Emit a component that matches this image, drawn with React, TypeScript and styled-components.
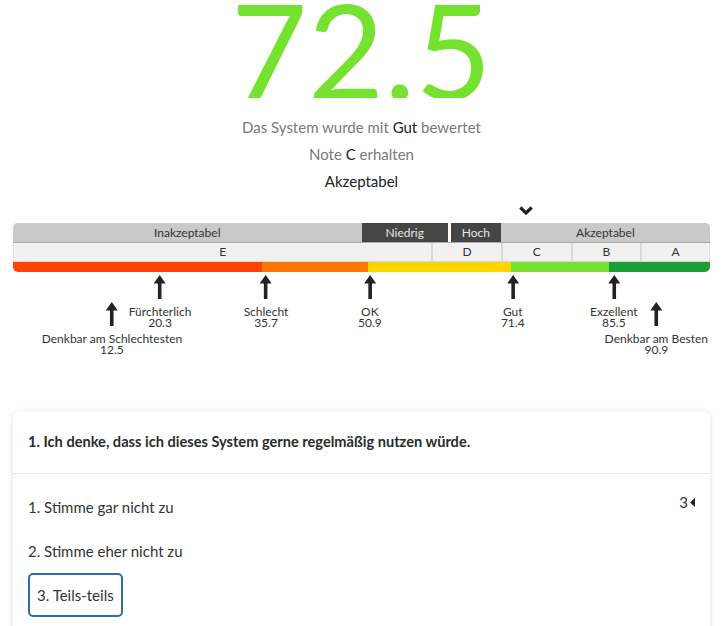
import React from 'react';
import styled, { createGlobalStyle } from 'styled-components';

const GlobalStyle = createGlobalStyle`
  html, body {
    margin: 0;
    padding: 0;
    overflow: hidden;
    background: #fff;
  }

  body {
    font-family: Lato, "Open Sans", "Liberation Sans", sans-serif;
    color: #333;
  }
`;

const Page = styled.div`
  padding: 0 13px;
`;

const Score = styled.div`
  font-size: 132px;
  font-weight: 400;
  line-height: 98px;
  height: 98px;
  margin-bottom: 16px;
  overflow: hidden;
  text-align: center;
  color: #75e22f;
`;

const Verdict = styled.div<{ $dark?: boolean }>`
  font-size: 15px;
  line-height: 27px;
  text-align: center;
  color: ${(p) => (p.$dark ? '#222' : '#7a7a7a')};
`;

const Strong = styled.span`
  color: #222;
`;

const Scale = styled.div`
  position: relative;
`;

const PointerRow = styled.div`
  position: relative;
  height: 28px;
`;

const Pointer = styled.svg`
  position: absolute;
  top: 11px;
  transform: translateX(-50%);
`;

const Bands = styled.div`
  border-radius: 5px;
  overflow: hidden;
`;

const LevelRow = styled.div`
  display: flex;
  height: 20px;
  background: #c9c9c9;
  border-bottom: 1px solid #a9a9a9;
  box-sizing: border-box;
`;

const Level = styled.div<{ $active?: boolean; $gap?: boolean }>`
  box-sizing: border-box;
  font-size: 12px;
  line-height: 19px;
  text-align: center;
  white-space: nowrap;
  color: ${(p) => (p.$active ? '#e6e6e6' : '#333')};
  background: ${(p) => (p.$active ? '#454545' : '#c9c9c9')};
  border-left: ${(p) => (p.$gap ? '3px solid #fff' : 'none')};
`;

const GradeRow = styled.div`
  display: flex;
  height: 19px;
  background: #f1f1f1;
  border-bottom: 1px solid #d6d6d6;
  box-sizing: border-box;
`;

const Grade = styled.div<{ $first?: boolean }>`
  box-sizing: border-box;
  font-size: 12px;
  line-height: 18px;
  text-align: center;
  color: #333;
  border-left: ${(p) => (p.$first ? '1px solid #e2e2e2' : '2px solid #dadada')};
  &:last-child {
    border-right: 1px solid #e2e2e2;
  }
`;

const ColorRow = styled.div`
  display: flex;
  height: 10px;
`;

const ColorBand = styled.div<{ $color: string }>`
  background: ${(p) => p.$color};
`;

const Markers = styled.div`
  position: relative;
  height: 100px;
`;

const Marker = styled.div<{ $low?: boolean }>`
  position: absolute;
  top: ${(p) => (p.$low ? '30px' : '3px')};
  transform: translateX(-50%);
  display: flex;
  flex-direction: column;
  align-items: center;
`;

const Arrow = styled.svg`
  display: block;
  margin-bottom: 6.5px;
`;

const MarkerText = styled.div`
  font-size: 12px;
  line-height: 11px;
  text-align: center;
  white-space: nowrap;
  color: #333;
`;

const Card = styled.div`
  margin-top: 39px;
  border-radius: 7px;
  background: #fff;
  box-shadow: 0 1px 6px rgba(0, 0, 0, 0.14);
`;

const CardHeader = styled.div`
  padding: 20px 15px;
  font-size: 14.6px;
  font-weight: 700;
  line-height: 22px;
  color: #2b2b2b;
  border-bottom: 1px solid #e6e6e6;
`;

const CardBody = styled.div`
  display: flex;
  justify-content: space-between;
  align-items: flex-start;
  padding: 11px 15px 40px;
`;

const Options = styled.div`
  display: flex;
  flex-direction: column;
  align-items: flex-start;
`;

const Option = styled.div<{ $selected?: boolean }>`
  font-size: 15px;
  color: #333;
  height: 44px;
  box-sizing: border-box;
  line-height: ${(p) => (p.$selected ? '40px' : '44px')};
  padding: ${(p) => (p.$selected ? '0 7px' : '0')};
  border: ${(p) => (p.$selected ? '2px solid #2e6da9' : 'none')};
  border-radius: 5px;
`;

const Answer = styled.div`
  display: flex;
  align-items: center;
  gap: 2px;
  margin-top: 7px;
  font-size: 15px;
  line-height: 20px;
  color: #333;
`;

const levels = [
  { name: 'Inakzeptabel', width: 50 },
  { name: 'Niedrig', width: 12.4, active: true },
  { name: 'Hoch', width: 7.6, active: true, gap: true },
  { name: 'Akzeptabel', width: 30 },
];

const grades = [
  { name: 'E', width: 60 },
  { name: 'D', width: 10 },
  { name: 'C', width: 10 },
  { name: 'B', width: 10 },
  { name: 'A', width: 10 },
];

const colors = [
  { color: '#ff4300', width: 35.7 },
  { color: '#ff7700', width: 15.2 },
  { color: '#ffd500', width: 20.5 },
  { color: '#74e22e', width: 14.1 },
  { color: '#1c9e37', width: 14.5 },
];

const markers = [
  { label: 'Denkbar am Schlechtesten', value: '12.5', pos: 14.2, low: true },
  { label: 'Fürchterlich', value: '20.3', pos: 21.1 },
  { label: 'Schlecht', value: '35.7', pos: 36.3 },
  { label: 'OK', value: '50.9', pos: 51.2 },
  { label: 'Gut', value: '71.4', pos: 71.7 },
  { label: 'Exzellent', value: '85.5', pos: 86.2 },
  { label: 'Denkbar am Besten', value: '90.9', pos: 92.3, low: true },
];

const options = ['1. Stimme gar nicht zu', '2. Stimme eher nicht zu', '3. Teils-teils'];

const UpArrow = () => (
  <Arrow width="12" height="24" viewBox="0 0 12 24">
    <path d="M6 0 L12 8.5 L7.8 8.5 L7.8 24 L4.2 24 L4.2 8.5 L0 8.5 Z" fill="#222" />
  </Arrow>
);

export default function App() {
  return (
    <>
      <GlobalStyle />
      <Page>
        <Score>72.5</Score>
        <Verdict>
          Das System wurde mit <Strong>Gut</Strong> bewertet
        </Verdict>
        <Verdict>
          Note <Strong>C</Strong> erhalten
        </Verdict>
        <Verdict $dark>Akzeptabel</Verdict>

        <Scale>
          <PointerRow>
            <Pointer width="15" height="9" viewBox="0 0 15 9" style={{ left: '73.6%' }}>
              <path d="M1.8 1.5 L7.5 7 L13.2 1.5" fill="none" stroke="#222" strokeWidth="3.2" />
            </Pointer>
          </PointerRow>

          <Bands>
            <LevelRow>
              {levels.map((l) => (
                <Level key={l.name} $active={l.active} $gap={l.gap} style={{ width: `${l.width}%` }}>
                  {l.name}
                </Level>
              ))}
            </LevelRow>
            <GradeRow>
              {grades.map((g, i) => (
                <Grade key={g.name} $first={i === 0} style={{ width: `${g.width}%` }}>
                  {g.name}
                </Grade>
              ))}
            </GradeRow>
            <ColorRow>
              {colors.map((c) => (
                <ColorBand key={c.color} $color={c.color} style={{ width: `${c.width}%` }} />
              ))}
            </ColorRow>
          </Bands>

          <Markers>
            {markers.map((m) => (
              <Marker key={m.label} $low={m.low} style={{ left: `${m.pos}%` }}>
                <UpArrow />
                <MarkerText>{m.label}</MarkerText>
                <MarkerText>{m.value}</MarkerText>
              </Marker>
            ))}
          </Markers>
        </Scale>

        <Card>
          <CardHeader>1. Ich denke, dass ich dieses System gerne regelmäßig nutzen würde.</CardHeader>
          <CardBody>
            <Options>
              {options.map((o, i) => (
                <Option key={o} $selected={i === 2}>
                  {o}
                </Option>
              ))}
            </Options>
            <Answer>
              3
              <svg width="5" height="9" viewBox="0 0 5 9">
                <path d="M5 0 L0 4.5 L5 9 Z" fill="#222" />
              </svg>
            </Answer>
          </CardBody>
        </Card>
      </Page>
    </>
  );
}
